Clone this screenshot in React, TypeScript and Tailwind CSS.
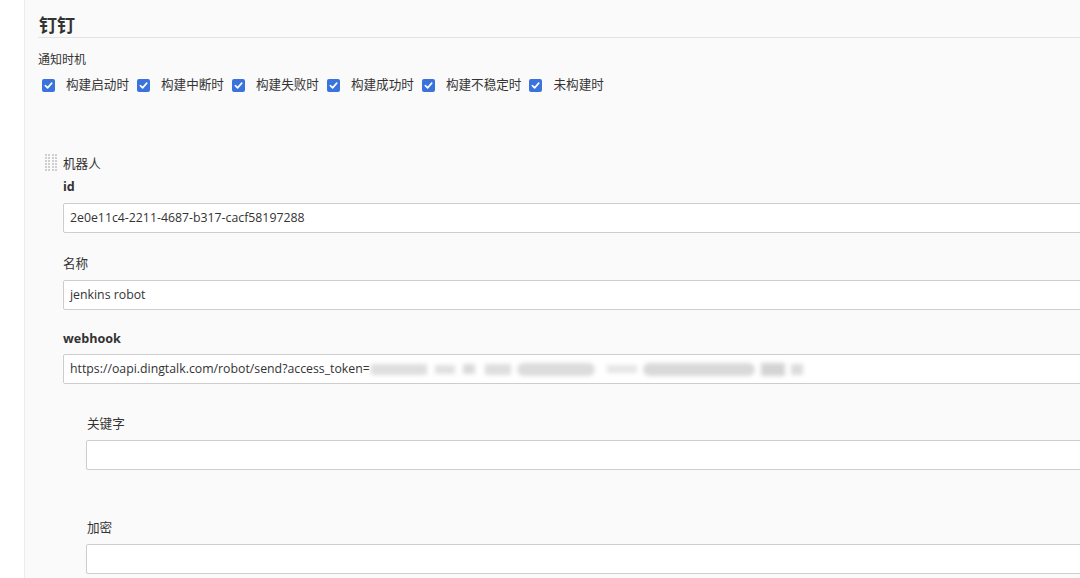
import React from "react";

const font = { fontFamily: '"Open Sans", "Noto Sans CJK SC", sans-serif' };

const triggers = ["构建启动时", "构建中断时", "构建失败时", "构建成功时", "构建不稳定时", "未构建时"];

// redaction smear over the token
const smear = [
  "w-[56px] h-[11px] bg-[#dedede]",
  "ml-[8px] w-[20px] h-[9px] bg-[#e0e0e0]",
  "ml-[8px] w-[12px] h-[10px] bg-[#dadada]",
  "ml-[10px] w-[26px] h-[11px] bg-[#dedede]",
  "ml-[6px] w-[78px] h-[13px] bg-[#dcdcdc] rounded-full",
  "ml-[12px] w-[30px] h-[8px] bg-[#e6e6e6]",
  "ml-[6px] w-[112px] h-[13px] bg-[#d9d9d9] rounded-full",
  "ml-[6px] w-[24px] h-[13px] bg-[#d4d4d4]",
  "ml-[6px] w-[12px] h-[11px] bg-[#dcdcdc]",
];

function Check() {
  return (
    <span className="w-[13px] h-[13px] rounded-[2px] bg-[#3a73dc] flex items-center justify-center shrink-0">
      <svg width="9" height="9" viewBox="0 0 10 10" fill="none">
        <path d="M1.5 5.2 L4 7.6 L8.6 2.4" stroke="white" strokeWidth="1.8" strokeLinecap="round" strokeLinejoin="round" />
      </svg>
    </span>
  );
}

function Handle() {
  return (
    <div className="grid grid-cols-4 gap-[1px] w-[12px] shrink-0">
      {Array.from({ length: 24 }).map((_, i) => (
        <span key={i} className="w-[2px] h-[2px] bg-[#cfcfcf]" />
      ))}
    </div>
  );
}

function Field({ value, children }: { value?: string; children?: React.ReactNode }) {
  return (
    <div className="relative h-[30px] w-full bg-white border border-[#cdcdcd] rounded-[2px] flex items-center px-[6px] text-[12.3px] text-[#333]">
      {value}
      {children}
    </div>
  );
}

export default function App() {
  return (
    <div className="w-[1080px] h-[578px] overflow-hidden bg-white flex" style={font}>
      <div className="w-[25px] shrink-0 bg-white border-r border-[#ececec]" />
      <div className="flex-1 bg-[#fafafa] pl-[13px] pt-[13px] min-w-0">
        <div className="w-[1120px]">
          <h1 className="h-[25px] leading-[25px] text-[18px] font-bold text-[#333] border-b border-[#e3e3e3] pl-[1px]">
            钉钉
          </h1>
          <div className="mt-[13px] leading-[18px] text-[12px] text-[#333]">通知时机</div>
          <div className="mt-[7px] flex items-center h-[18px] pl-[4px] text-[12.6px] text-[#333]">
            {triggers.map((t) => (
              <label key={t} className="flex items-center mr-[8px]">
                <Check />
                <span className="ml-[11px] whitespace-nowrap">{t}</span>
              </label>
            ))}
          </div>

          <div className="mt-[61px] flex">
            <div className="w-[25px] pl-[7px] -mt-[1px]">
              <Handle />
            </div>
            <div className="flex-1 text-[12.6px] text-[#333]">
              <div className="leading-[18px]">机器人</div>
              <div className="mt-[5px] leading-[18px] font-bold">id</div>
              <div className="mt-[7px]">
                <Field value="2e0e11c4-2211-4687-b317-cacf58197288" />
              </div>
              <div className="mt-[22px] leading-[18px]">名称</div>
              <div className="mt-[7px]">
                <Field value="jenkins robot" />
              </div>
              <div className="mt-[20px] leading-[18px] font-bold">webhook</div>
              <div className="mt-[6px]">
                <Field value="https://oapi.dingtalk.com/robot/send?access_token=">
                  <div className="ml-[1px] flex items-center blur-[2px] pointer-events-none">
                    {smear.map((c, i) => (
                      <span key={i} className={c} />
                    ))}
                  </div>
                </Field>
              </div>
              <div className="pl-[24px]">
                <div className="mt-[31px] leading-[18px]">关键字</div>
                <div className="mt-[7px] -ml-[1px]">
                  <Field />
                </div>
                <div className="mt-[49px] leading-[18px]">加密</div>
                <div className="mt-[7px] -ml-[1px]">
                  <Field />
                </div>
              </div>
            </div>
          </div>
        </div>
      </div>
    </div>
  );
}
